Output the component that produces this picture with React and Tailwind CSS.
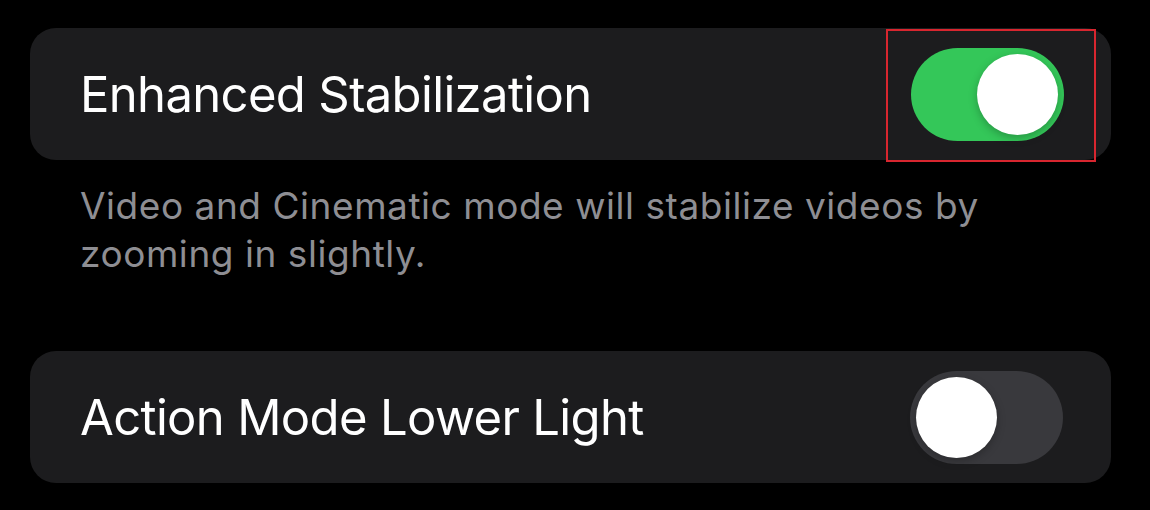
export default function App() {
  const font = { fontFamily: 'Inter, "Noto Sans", sans-serif' };
  return (
    <div className="w-[1150px] h-[510px] bg-black overflow-hidden pt-[28px] pl-[30px]" style={font}>
      <div className="w-[1081px]">
        {/* Enhanced Stabilization */}
        <div className="h-[132px] rounded-[26px] bg-[#1c1c1e] flex items-center justify-between pl-[50px] pr-[47px]">
          <span className="text-white text-[49px] leading-none tracking-[-0.65px]">Enhanced Stabilization</span>
          <div className="relative">
            <div className="w-[153px] h-[93px] rounded-full bg-[#34c759] flex items-center justify-end pr-[6px]">
              <div className="w-[81px] h-[81px] rounded-full bg-white shadow-[0_3px_8px_rgba(0,0,0,0.25)]" />
            </div>
            <div className="absolute left-[-25px] top-[-19px] w-[210px] h-[133px] border-2 border-[#d8262f]" />
          </div>
        </div>
        <p className="pl-[50px] pr-[90px] pt-[22px] text-[#8e8e93] text-[37px] leading-[48px] tracking-[0.55px]">
          Video and Cinematic mode will stabilize videos by zooming in slightly.
        </p>
        {/* Action Mode Lower Light */}
        <div className="mt-[73px] h-[132px] rounded-[26px] bg-[#1c1c1e] flex items-center justify-between pl-[50px] pr-[48px]">
          <span className="text-white text-[49px] leading-none tracking-[-0.65px]">Action Mode Lower Light</span>
          <div className="w-[153px] h-[93px] rounded-full bg-[#39393d] flex items-center pl-[6px]">
            <div className="w-[81px] h-[81px] rounded-full bg-white shadow-[0_3px_8px_rgba(0,0,0,0.25)]" />
          </div>
        </div>
      </div>
    </div>
  );
}
